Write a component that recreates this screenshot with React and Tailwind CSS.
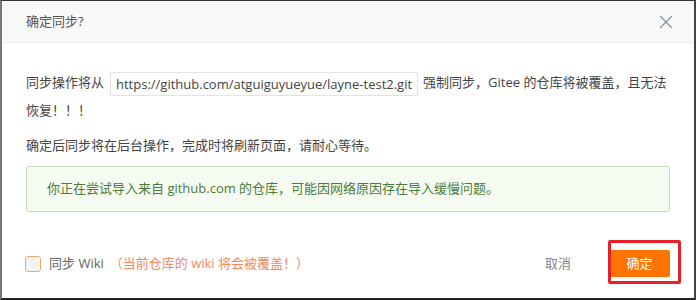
import React from "react";

// 确认同步弹窗
export default function App() {
  return (
    <div
      className="w-[696px] h-[300px] bg-white border-t border-t-[#333] border-l-2 border-l-[#777] border-r-2 border-r-[#444] border-b-2 border-b-[#222] flex flex-col relative"
      style={{ fontFamily: '"Open Sans", "Noto Sans CJK SC", sans-serif' }}
    >
      {/* header */}
      <div className="h-[42px] bg-[#f8f8f8] border-b border-[#eeeeee] flex items-center justify-between px-[24px] shrink-0">
        <span className="text-[13px] text-[#555]">确定同步?</span>
        <svg width="16" height="16" viewBox="0 0 16 16" className="mr-[-4px]">
          <path d="M2 2L14 14M14 2L2 14" stroke="#8a9ba8" strokeWidth="1.4" fill="none" />
        </svg>
      </div>

      {/* body */}
      <div className="px-[24px] text-[13px] text-[#444]">
        <p className="mt-[25px] leading-[28px]">
          <span>同步操作将从</span>
          <span className="inline-block ml-[6px] mr-[5px] border border-[#e3e3e3] px-[5px] leading-[22px] align-middle">
            https://github.com/atguiguyueyue/layne-test2.git
          </span>
          <span>强制同步，Gitee 的仓库将被覆盖，且无法恢复！！！</span>
        </p>
        <p className="mt-[7px] leading-[28px]">
          确定后同步将在后台操作，完成时将刷新页面，请耐心等待。
        </p>
        <div className="mt-[7px] h-[46px] rounded-[3px] border border-[#c6dcba] bg-[#f6fbf2] flex items-center pl-[20px] text-[#4b7d3a]">
          你正在尝试导入来自 github.com 的仓库，可能因网络原因存在导入缓慢问题。
        </div>
      </div>

      {/* footer */}
      <div className="mt-[38px] px-[23px] flex items-center text-[13px]">
        <span className="w-[16px] h-[16px] rounded-[3px] border border-[#f5a56e] bg-[#f4f4f4] mr-[8px]" />
        <span className="text-[#666]">同步 Wiki</span>
        <span className="ml-[6px] text-[#f28a5c]">（当前仓库的 wiki 将会被覆盖！）</span>
        <span className="ml-auto text-[#7a8896] mr-[38px]">取消</span>
        <button className="w-[61px] h-[27px] bg-[#ff7300] text-white text-[13px] rounded-[2px] mr-[1px]">
          确定
        </button>
      </div>

      {/* highlight annotation */}
      <div className="absolute left-[606px] top-[239px] w-[73px] h-[44px] border-[3px] border-[#e8202a] rounded-[2px]" />
    </div>
  );
}
